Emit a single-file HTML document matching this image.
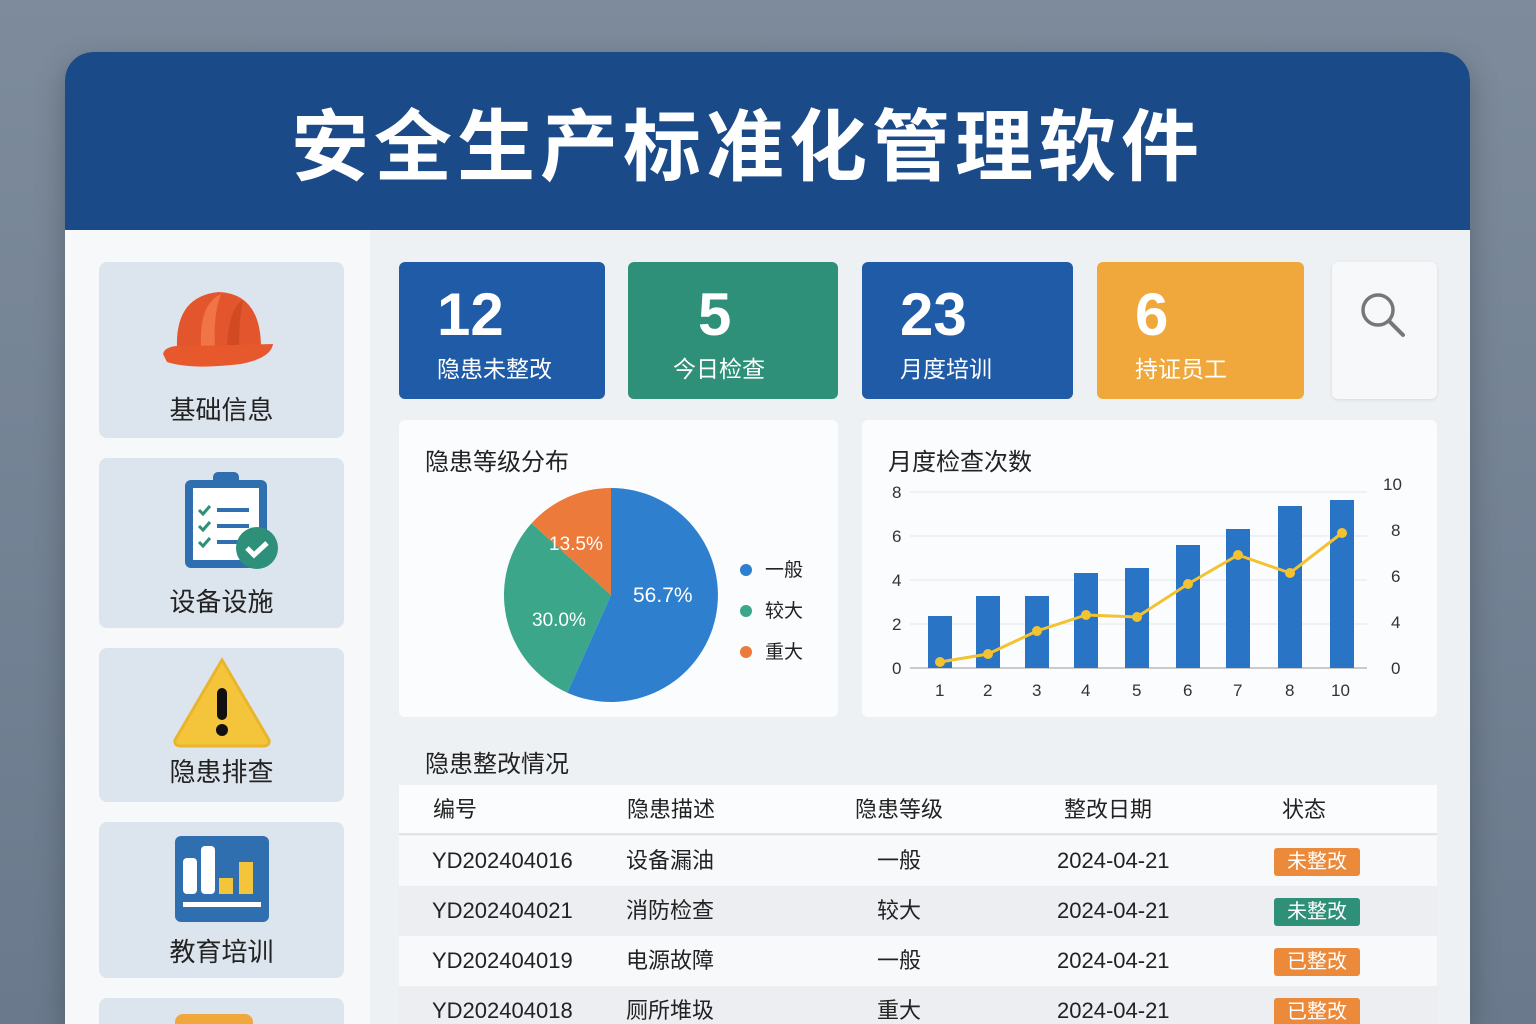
<!DOCTYPE html>
<html><head><meta charset="utf-8"><style>
*{box-sizing:border-box;margin:0;padding:0}
html,body{width:1536px;height:1024px;overflow:hidden}
body{background:linear-gradient(180deg,#7d8b9c,#6a7a8c);font-family:"Liberation Sans","Noto Sans CJK SC",sans-serif;position:relative}
.card{position:absolute;left:65px;top:52px;width:1405px;height:972px;border-radius:28px 28px 0 0;background:#eef1f4;overflow:hidden;box-shadow:0 10px 30px rgba(0,0,0,.25)}
.hdr{position:absolute;left:0;top:0;width:100%;height:178px;background:#1b4a89;color:#fff;font-size:78px;font-weight:bold;text-align:center;line-height:178px;letter-spacing:5px;font-family:"Noto Sans CJK SC",sans-serif;padding-right:40px}
.side{position:absolute;left:0;top:178px;width:305px;height:794px;background:#f6f8fa;overflow:hidden}
.it{position:absolute;left:34px;width:245px;background:#dce5ee;border-radius:8px;text-align:center;font-size:26px;color:#222;font-family:"Noto Sans CJK SC",sans-serif}
.it span{position:absolute;left:0;right:0}
.abs{position:absolute}
.stat{position:absolute;top:210px;height:137px;border-radius:6px;color:#fff}
.stat b{position:absolute;left:38px;top:18px;font-size:60px;font-weight:bold}
.stat i{position:absolute;left:38px;top:88px;font-style:normal;font-size:23px;font-family:"Noto Sans CJK SC",sans-serif}
.panel{position:absolute;background:#fbfcfd;border-radius:6px}
.pt{position:absolute;left:26px;top:22px;font-size:24px;color:#222;font-family:"Noto Sans CJK SC",sans-serif}
.row{position:absolute;left:334px;width:1038px;height:50px;font-size:22px;color:#222;font-family:"Liberation Sans","Noto Sans CJK SC",sans-serif;line-height:50px;overflow:hidden}
.row span{position:absolute;top:0}
.tag{position:absolute;left:875px;top:12px;width:86px;height:28px;border-radius:3px;color:#fff;font-size:20px;text-align:center;line-height:28px}
</style></head><body>
<div class="card">
<div class="hdr">安全生产标准化管理软件</div>
<div class="side">
 <div class="it" style="top:32px;height:176px"><svg class="abs" style="left:62px;top:24px" width="116" height="90" viewBox="0 0 116 90"><path d="M16 62 Q14 10 58 6 Q100 8 100 62 Z" fill="#e3552c"/><path d="M40 60 Q38 18 60 8 Q52 30 54 60Z" fill="#f07446"/><path d="M66 60 Q68 22 82 14 Q78 34 78 60Z" fill="#d14a22"/><path d="M2 68 Q4 58 30 60 L112 58 Q110 72 80 78 Q30 84 6 76 Z" fill="#e8582d"/></svg><span style="top:128px">基础信息</span></div>
 <div class="it" style="top:228px;height:170px"><svg class="abs" style="left:82px;top:12px" width="100" height="100" viewBox="0 0 100 100"><rect x="4" y="10" width="82" height="88" rx="6" fill="#2f6fb0"/><rect x="12" y="18" width="66" height="72" fill="#fff"/><rect x="32" y="2" width="26" height="14" rx="5" fill="#2f6fb0"/><path d="M18 40l4 4 7-8M18 56l4 4 7-8M18 72l4 4 7-8" stroke="#2e9079" stroke-width="3" fill="none"/><path d="M36 40h32M36 56h32M36 72h26" stroke="#2f6fb0" stroke-width="4"/><circle cx="76" cy="78" r="21" fill="#2e9079"/><path d="M66 78l7 7 13-12" stroke="#fff" stroke-width="5" fill="none"/></svg><span style="top:124px">设备设施</span></div>
 <div class="it" style="top:418px;height:154px"><svg class="abs" style="left:72px;top:8px" width="102" height="92" viewBox="0 0 102 92"><path d="M51 4 L98 84 Q99 90 92 90 H10 Q3 90 4 84 Z" fill="#f4c53b" stroke="#e8b52c" stroke-width="3"/><rect x="46" y="32" width="10" height="32" rx="5" fill="#111"/><circle cx="51" cy="74" r="6" fill="#111"/></svg><span style="top:104px">隐患排查</span></div>
 <div class="it" style="top:592px;height:156px"><svg class="abs" style="left:76px;top:14px" width="94" height="86" viewBox="0 0 94 86"><rect x="0" y="0" width="94" height="86" rx="6" fill="#2f6fb0"/><rect x="8" y="22" width="14" height="36" rx="4" fill="#fff"/><rect x="26" y="10" width="14" height="48" rx="4" fill="#fff"/><rect x="44" y="42" width="14" height="16" fill="#f4c53b"/><rect x="64" y="26" width="14" height="32" fill="#f4c53b"/><rect x="8" y="66" width="78" height="5" fill="#fff"/></svg><span style="top:110px">教育培训</span></div>
 <div class="it" style="top:768px;height:26px;border-radius:8px 8px 0 0;overflow:hidden"><div class="abs" style="left:76px;top:16px;width:78px;height:10px;background:#f0a83c;border-radius:8px 8px 0 0"></div></div>
</div>
<div class="stat" style="left:334px;width:206px;background:#1f5ba6"><b>12</b><i>隐患未整改</i></div>
<div class="stat" style="left:563px;width:210px;background:#2e9079"><b style="left:70px">5</b><i style="left:45px">今日检查</i></div>
<div class="stat" style="left:797px;width:211px;background:#1f5ba6"><b>23</b><i>月度培训</i></div>
<div class="stat" style="left:1032px;width:207px;background:#f0a83c"><b>6</b><i>持证员工</i></div>
<div class="stat" style="left:1267px;width:105px;background:#f7f8fa;box-shadow:0 1px 3px rgba(0,0,0,.1)"><svg class="abs" style="left:26px;top:28px" width="52" height="52" viewBox="0 0 52 52"><circle cx="20" cy="20" r="15" stroke="#777" stroke-width="3.5" fill="none"/><path d="M31 31l14 14" stroke="#777" stroke-width="4" stroke-linecap="round"/></svg></div>

<div class="panel" style="left:334px;top:368px;width:439px;height:297px"><div class="pt">隐患等级分布</div>
<svg class="abs" style="left:0;top:0" width="439" height="297">
<path d="M212 175 L212 68 A107 107 0 1 1 168.3 272.7Z" fill="#2f7fcf"/>
<path d="M212 175 L168.3 272.7 A107 107 0 0 1 132.6 103.3Z" fill="#3ba68a"/>
<path d="M212 175 L132.6 103.3 A107 107 0 0 1 212 68Z" fill="#ec7a3a"/>
<g fill="#fff" font-size="19" font-family="Liberation Sans"><text x="234" y="182" font-size="21">56.7%</text><text x="133" y="206">30.0%</text><text x="150" y="130">13.5%</text></g>
<g font-size="19" fill="#222" font-family="Noto Sans CJK SC"><circle cx="347" cy="150" r="6" fill="#2f7fcf"/><text x="366" y="156">一般</text><circle cx="347" cy="191" r="6" fill="#3ba68a"/><text x="366" y="197">较大</text><circle cx="347" cy="232" r="6" fill="#ec7a3a"/><text x="366" y="238">重大</text></g>
</svg></div>

<div class="panel" style="left:797px;top:368px;width:575px;height:297px"><div class="pt">月度检查次数</div>
<svg class="abs" style="left:0;top:0" width="575" height="297" font-family="Liberation Sans" font-size="17" fill="#333">
<g stroke="#e3e6ea"><line x1="48" y1="72" x2="505" y2="72"/><line x1="48" y1="116" x2="505" y2="116"/><line x1="48" y1="160" x2="505" y2="160"/><line x1="48" y1="204" x2="505" y2="204"/><line x1="48" y1="248" x2="505" y2="248" stroke="#999"/></g>
<text x="30" y="78">8</text><text x="30" y="122">6</text><text x="30" y="166">4</text><text x="30" y="210">2</text><text x="30" y="254">0</text>
<text x="521" y="70">10</text><text x="529" y="116">8</text><text x="529" y="162">6</text><text x="529" y="208">4</text><text x="529" y="254">0</text>
<g fill="#2a74c6"><rect x="66" y="196" width="24" height="52"/><rect x="114" y="176" width="24" height="72"/><rect x="163" y="176" width="24" height="72"/><rect x="212" y="153" width="24" height="95"/><rect x="263" y="148" width="24" height="100"/><rect x="314" y="125" width="24" height="123"/><rect x="364" y="109" width="24" height="139"/><rect x="416" y="86" width="24" height="162"/><rect x="468" y="80" width="24" height="168"/></g>
<polyline points="78,242 126,234 175,211 224,195 275,197 326,164 376,135 428,153 480,113" fill="none" stroke="#f2c230" stroke-width="3"/>
<g fill="#f2c230"><circle cx="78" cy="242" r="5"/><circle cx="126" cy="234" r="5"/><circle cx="175" cy="211" r="5"/><circle cx="224" cy="195" r="5"/><circle cx="275" cy="197" r="5"/><circle cx="326" cy="164" r="5"/><circle cx="376" cy="135" r="5"/><circle cx="428" cy="153" r="5"/><circle cx="480" cy="113" r="5"/></g>
<text x="73" y="276">1</text><text x="121" y="276">2</text><text x="170" y="276">3</text><text x="219" y="276">4</text><text x="270" y="276">5</text><text x="321" y="276">6</text><text x="371" y="276">7</text><text x="423" y="276">8</text><text x="469" y="276">10</text>
</svg></div>

<div class="abs" style="left:360px;top:692px;font-size:24px;color:#222;font-family:'Noto Sans CJK SC'">隐患整改情况</div>
<div class="row" style="top:733px;background:#fbfcfd;border-bottom:2px solid #e0e3e7"><span style="left:34px">编号</span><span style="left:228px">隐患描述</span><span style="left:456px">隐患等级</span><span style="left:665px">整改日期</span><span style="left:883px">状态</span></div>
<div class="row" style="top:784px;background:#f8f9fa"><span style="left:33px">YD202404016</span><span style="left:227px">设备漏油</span><span style="left:478px">一般</span><span style="left:658px">2024-04-21</span><div class="tag" style="background:#ec8a3c">未整改</div></div>
<div class="row" style="top:834px;background:#eceef1"><span style="left:33px">YD202404021</span><span style="left:227px">消防检查</span><span style="left:478px">较大</span><span style="left:658px">2024-04-21</span><div class="tag" style="background:#2e9079">未整改</div></div>
<div class="row" style="top:884px;background:#f8f9fa"><span style="left:33px">YD202404019</span><span style="left:227px">电源故障</span><span style="left:478px">一般</span><span style="left:658px">2024-04-21</span><div class="tag" style="background:#ec8a3c">已整改</div></div>
<div class="row" style="top:934px;height:38px;background:#eceef1"><span style="left:33px">YD202404018</span><span style="left:227px">厕所堆圾</span><span style="left:478px">重大</span><span style="left:658px">2024-04-21</span><div class="tag" style="background:#ec8a3c">已整改</div></div>
</div>
</body></html>
